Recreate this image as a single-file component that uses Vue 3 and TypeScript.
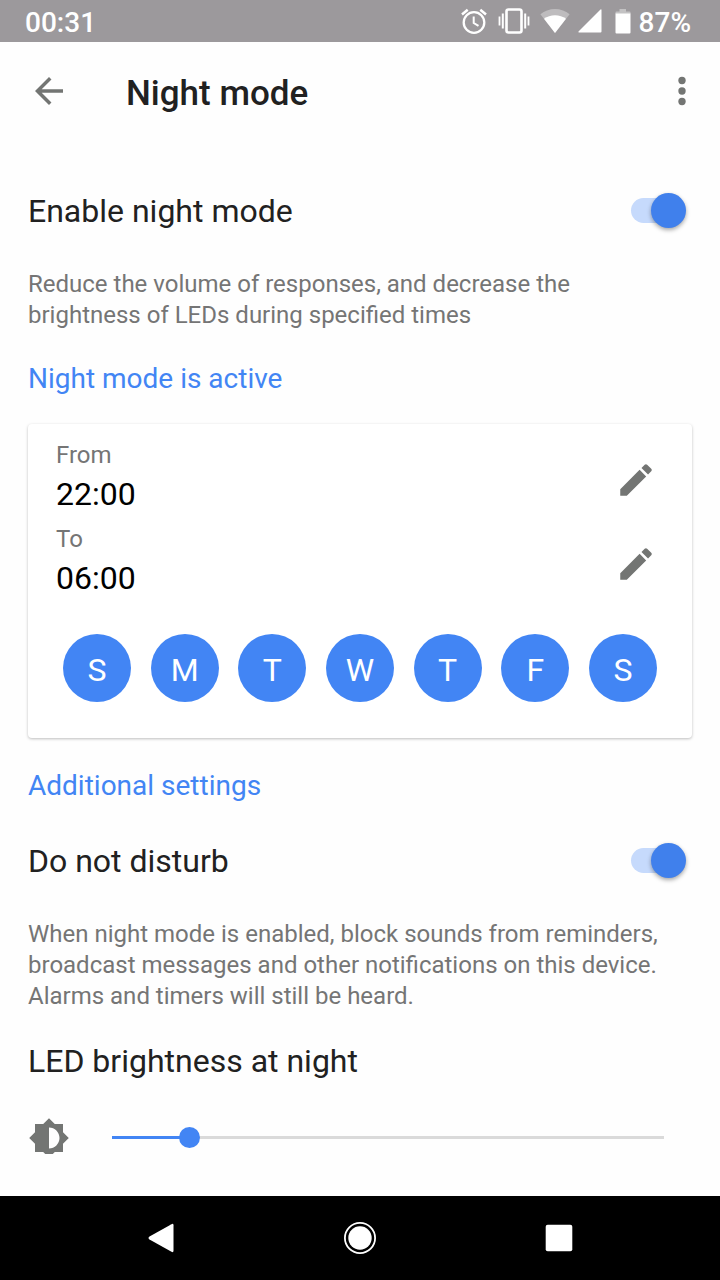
<script setup lang="ts">
import { computed, ref } from 'vue'

interface TimeRow {
  id: string
  label: string
  value: string
}

interface Day {
  name: string
  letter: string
  on: boolean
}

const MAX_BRIGHTNESS = 255

const nightMode = ref(true)
const doNotDisturb = ref(true)
const brightness = ref(32)

const times = ref<TimeRow[]>([
  { id: 'from', label: 'From', value: '22:00' },
  { id: 'to', label: 'To', value: '06:00' },
])

const days = ref<Day[]>([
  { name: 'Sunday', letter: 'S', on: true },
  { name: 'Monday', letter: 'M', on: true },
  { name: 'Tuesday', letter: 'T', on: true },
  { name: 'Wednesday', letter: 'W', on: true },
  { name: 'Thursday', letter: 'T', on: true },
  { name: 'Friday', letter: 'F', on: true },
  { name: 'Saturday', letter: 'S', on: true },
])

const fill = computed(() => ({ '--fill': `${(brightness.value / MAX_BRIGHTNESS) * 100}%` }))
</script>

<template>
  <div class="screen">
    <div class="status">
      <span>00:31</span>
      <div class="status-right">
        <svg class="alarm" width="26" height="26" viewBox="0 0 26 26" fill="none" stroke="#fff" stroke-width="2.3">
          <circle cx="13" cy="14.500" r="10.300" />
          <path d="M12.700 8.500v6.500l4.800 2.900" stroke-width="2" />
          <path d="M1 6.500L6.700 1.700M25 6.500L19.300 1.700" stroke-width="2.500" />
        </svg>
        <svg class="vibrate" width="32" height="28" viewBox="0 0 32 28" fill="none" stroke="#fff">
          <rect x="8.500" y="2.500" width="15" height="23" rx="2" stroke-width="2.600" />
          <path d="M4.800 6.500v15M27.200 6.500v15" stroke-width="2" />
          <path d="M1.500 9.500v9M30.500 9.500v9" stroke-width="1.800" />
        </svg>
        <svg class="wifi" width="30" height="26" viewBox="0 0 30 26" fill="#fff">
          <path d="M15 25L.4 6.200C4.500 3 9.500 1 15 1s10.500 2 14.600 5.200z" opacity=".35" />
          <path d="M15 25L4 10.800C7 8.500 11 7.200 15 7.200s8 1.300 11 3.600z" />
        </svg>
        <svg class="signal" width="24" height="24" viewBox="0 0 24 24" fill="#fff">
          <path d="M22.500.4Q23.500 0 23.500 1V22.500Q23.500 23.500 22.500 23.500H1Q0 23.500.5 22.500z" />
        </svg>
        <svg class="battery" width="16" height="26" viewBox="0 0 16 26" fill="#fff">
          <path d="M4.500 1h6.500v2.500h3.500q1 0 1 1V6H.5V4.500q0-1 1-1h3z" opacity=".4" />
          <path d="M.5 5.500h15v19q0 1-1 1h-13q-1 0-1-1z" />
        </svg>
        <span>87%</span>
      </div>
    </div>

    <header class="app-bar">
      <button class="icon-button" type="button" aria-label="Back">
        <svg class="icon" viewBox="0 0 24 24"><path d="M20 11H7.830l5.590-5.590L12 4l-8 8 8 8 1.410-1.410L7.830 13H20v-2z" /></svg>
      </button>
      <h1>Night mode</h1>
      <button class="icon-button" type="button" aria-label="More options">
        <svg class="icon" viewBox="0 0 24 24">
          <circle cx="12" cy="6" r="2.100" /><circle cx="12" cy="12" r="2.100" /><circle cx="12" cy="18" r="2.100" />
        </svg>
      </button>
    </header>

    <main class="content">
      <div class="setting">
        <label for="night">Enable night mode</label>
        <input id="night" v-model="nightMode" class="switch" type="checkbox" role="switch" />
      </div>
      <p class="hint">Reduce the volume of responses, and decrease the brightness of LEDs during specified times</p>
      <h2>Night mode is active</h2>

      <section class="card">
        <div v-for="time in times" :key="time.id" class="time">
          <div class="time-text">
            <div class="time-label">{{ time.label }}</div>
            <div class="time-value">{{ time.value }}</div>
          </div>
          <button class="icon-button" type="button" :aria-label="`Edit ${time.label}`">
            <svg class="icon" viewBox="0 0 24 24"><path d="M3 17.250V21h3.750L17.810 9.940l-3.750-3.750L3 17.250zM20.710 7.040c.39-.39.39-1.020 0-1.410l-2.340-2.340c-.39-.39-1.020-.39-1.410 0l-1.830 1.830 3.750 3.750 1.830-1.830z" /></svg>
          </button>
        </div>
        <div class="days">
          <button
            v-for="day in days"
            :key="day.name"
            class="day"
            :class="{ off: !day.on }"
            type="button"
            :aria-label="day.name"
            :aria-pressed="day.on"
            @click="day.on = !day.on"
          >{{ day.letter }}</button>
        </div>
      </section>

      <h2>Additional settings</h2>
      <div class="setting">
        <label for="dnd">Do not disturb</label>
        <input id="dnd" v-model="doNotDisturb" class="switch" type="checkbox" role="switch" />
      </div>
      <p class="hint">When night mode is enabled, block sounds from reminders, broadcast messages and other notifications on this device. Alarms and timers will still be heard.</p>
      <label class="led-label" for="led">LED brightness at night</label>
      <div class="led">
        <div class="led-icon">
          <svg class="icon" viewBox="0 0 24 24"><path d="M20 15.310L23.310 12 20 8.690V4h-4.690L12 .69 8.690 4H4v4.690L.69 12 4 15.310V20h4.690L12 23.310 15.310 20H20v-4.690zM12 18V6c3.310 0 6 2.690 6 6s-2.690 6-6 6z" /></svg>
        </div>
        <input id="led" v-model.number="brightness" class="slider" type="range" min="0" :max="MAX_BRIGHTNESS" :style="fill" />
      </div>
    </main>

    <nav class="nav">
      <button type="button" aria-label="System back">
        <svg width="32" height="32" viewBox="0 0 32 32" fill="#fff"><path d="M26.500 2.200Q28.500 1.200 28.500 3.200V28.800Q28.500 30.800 26.500 29.800L4.500 17.500Q2.500 16 4.500 14.500z" /></svg>
      </button>
      <button type="button" aria-label="Home">
        <svg width="34" height="34" viewBox="0 0 34 34" fill="#fff">
          <circle cx="17" cy="17" r="11.700" />
          <circle cx="17" cy="17" r="15.100" fill="none" stroke="#fff" stroke-width="1.800" />
        </svg>
      </button>
      <button type="button" aria-label="Recent apps">
        <svg width="28" height="28" viewBox="0 0 28 28" fill="#fff"><rect x=".7" y=".7" width="26.600" height="26.600" rx="2" /></svg>
      </button>
    </nav>
  </div>
</template>

<style>
body {
  background: #fefefe;
}
</style>

<style scoped>
.screen {
  display: flex;
  flex-direction: column;
  min-height: 100vh;
  background: #fefefe;
  color: #212121;
  font-family: Roboto, "Liberation Sans", sans-serif;
}

button {
  display: flex;
  align-items: center;
  justify-content: center;
  padding: 0;
  border: 0;
  background: none;
  color: inherit;
  font: inherit;
  cursor: pointer;
}

svg {
  display: block;
}

.status {
  display: flex;
  align-items: center;
  justify-content: space-between;
  height: 42px;
  padding: 0 29px 0 25px;
  background: #9c999c;
  color: #fff;
  font-size: 28px;
  font-weight: 500;
  line-height: 40px;
}

.status span {
  padding-top: 4px;
}

.status-right {
  display: flex;
  align-items: center;
}

.vibrate {
  margin-left: 11px;
}

.wifi {
  margin-left: 10px;
}

.signal {
  margin-left: 8px;
}

.battery {
  margin: 0 8px 0 13px;
}

.app-bar {
  display: flex;
  align-items: center;
  height: 98px;
  padding: 0 17px 0 28px;
}

.icon {
  width: 42px;
  height: 42px;
  fill: #737573;
}

h1 {
  flex: 1;
  margin: 0 0 0 56px;
  padding-top: 5px;
  font-size: 35px;
  font-weight: 500;
  line-height: 44px;
}

.content {
  padding: 40px 28px 24px;
}

.setting {
  display: flex;
  align-items: center;
  justify-content: space-between;
  height: 60px;
  padding-right: 6px;
  font-size: 32px;
}

.setting label {
  padding-top: 1px;
}

.switch {
  appearance: none;
  display: grid;
  align-items: center;
  width: 55px;
  height: 36px;
  margin: 0;
  cursor: pointer;
}

.switch::before,
.switch::after {
  content: "";
  grid-area: 1 / 1;
}

.switch::before {
  width: 46px;
  height: 25px;
  border-radius: 13px;
  background: #d0d0d0;
}

.switch::after {
  width: 35px;
  height: 35px;
  border-radius: 50%;
  background: #f5f5f5;
  box-shadow: 0 2px 4px rgba(0, 0, 0, 0.35);
}

.switch:checked::before {
  background: #c6dafc;
}

.switch:checked::after {
  justify-self: end;
  background: #4080ec;
}

.hint {
  margin: 29px 0 0;
  padding-right: 24px;
  color: #757575;
  font-size: 24px;
  line-height: 31px;
}

h2 {
  margin: 29px 0 25px;
  color: #4285f4;
  font-size: 28px;
  font-weight: 400;
  line-height: 38px;
}

.card {
  margin-top: 26px;
  padding: 14px 28px 36px;
  border-radius: 4px;
  background: #fff;
  box-shadow: 0 1px 3px rgba(0, 0, 0, 0.26);
}

.time {
  display: flex;
  align-items: center;
  justify-content: space-between;
  height: 84px;
  padding-right: 7px;
}

.time-text {
  align-self: flex-start;
}

.time-label {
  color: #757575;
  font-size: 24px;
  line-height: 35px;
}

.time-value {
  color: #000;
  font-size: 32px;
  line-height: 42px;
}

.days {
  display: flex;
  justify-content: space-between;
  padding: 28px 7px 0;
}

.day {
  width: 68px;
  height: 68px;
  padding-top: 3px;
  border-radius: 50%;
  background: #4285f4;
  color: #fff;
  font-size: 32px;
}

.day.off {
  background: #e0e0e0;
  color: #757575;
}

.led-label {
  display: block;
  margin-top: 27px;
  font-size: 32px;
  line-height: 44px;
}

.led {
  display: flex;
  align-items: flex-start;
  margin-top: 33px;
}

.led-icon {
  height: 37px;
  padding-top: 1px;
  overflow: hidden;
}

.slider {
  appearance: none;
  flex: 1;
  min-width: 0;
  height: 42px;
  margin: 0 28px 0 42px;
  background: linear-gradient(to right, #4285f4 var(--fill), #dadada var(--fill)) center / 100% 3px no-repeat;
  cursor: pointer;
}

.slider::-webkit-slider-thumb {
  appearance: none;
  width: 21px;
  height: 21px;
  border: 0;
  border-radius: 50%;
  background: #4285f4;
}

.nav {
  display: flex;
  justify-content: space-around;
  height: 84px;
  margin-top: auto;
  padding: 0 61px;
  background: #000;
}

.nav button {
  flex: 1;
}
</style>
